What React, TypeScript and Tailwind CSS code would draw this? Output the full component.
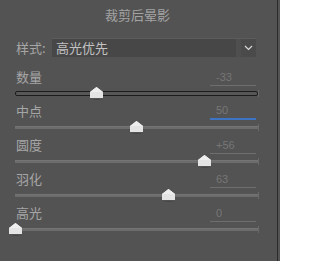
import React from "react";

const font = { fontFamily: '"Noto Sans CJK SC", "Noto Sans", sans-serif' };

type Row = { label: string; value: string; pct: number; focused?: boolean; active?: boolean };

const rows: Row[] = [
  { label: "数量", value: "-33", pct: 0.335, active: true },
  { label: "中点", value: "50", pct: 0.5, focused: true },
  { label: "圆度", value: "+56", pct: 0.78 },
  { label: "羽化", value: "63", pct: 0.63 },
  { label: "高光", value: "0", pct: 0 },
];

function Thumb({ pct }: { pct: number }) {
  const left = pct * 243 - 6.5;
  return (
    <svg
      className="absolute top-[1px]"
      style={{ left }}
      width="14"
      height="14"
      viewBox="0 0 14 14"
    >
      <polygon points="7,12 13,13 1,13" fill="#3a3a3a" opacity="0.6" />
      <polygon points="6.5,0 13,5 13,11 0,11 0,5" fill="#e4e4e4" />
      <polygon points="6.5,0 13,5 0,5" fill="#eeeeee" />
    </svg>
  );
}

function SliderRow({ row }: { row: Row }) {
  return (
    <div className="h-[34px] flex flex-col">
      <div className="h-[18px] flex items-center justify-between pl-[16px]">
        <span className="text-[13px] leading-[18px] text-[#a6a6a6]">{row.label}</span>
        <div
          className={
            row.focused
              ? "w-[46px] h-[18px] mr-[21px] pl-[6px] border-b-2 border-[#3d74c4] flex items-center"
              : "w-[46px] h-[18px] mr-[21px] pl-[6px] border-b border-[#6e6e6e] flex items-center"
          }
        >
          <span className="text-[11px] leading-[14px] text-[#767676]" style={{ fontFamily: '"Liberation Sans", sans-serif' }}>
            {row.value}
          </span>
        </div>
      </div>
      <div className="relative h-[16px] ml-[15px] w-[243px]">
        {row.active ? (
          <div className="absolute left-0 right-0 top-[5px] h-[5px] rounded-[2px] border border-[#1c1c1c] bg-[#575757]" />
        ) : (
          <div className="absolute left-0 right-0 top-[6px] h-[3px] bg-[#6c6c6c] border-t border-[#747474]" />
        )}
        <div className="absolute right-[-1px] top-[4px] w-[1px] h-[7px] bg-[#6a6a6a]" />
        <Thumb pct={row.pct} />
      </div>
    </div>
  );
}

export default function App() {
  return (
    <div className="w-[280px] h-[261px] bg-[#535353] flex overflow-hidden" style={font}>
      <div className="w-[277px] flex flex-col">
        <div className="h-[38px] pt-[6px] flex justify-center">
          <span className="text-[13px] leading-[18px] text-[#a3a3a3] ml-[-2px]">裁剪后晕影</span>
        </div>
        <div className="h-[19px] flex items-center pl-[16px]">
          <span className="w-[36px] text-[13px] leading-[18px] text-[#a6a6a6]">样式:</span>
          <div className="w-[204px] h-[19px] flex bg-[#4f4f4f] border-t border-[#5c5c5c]">
            <div className="flex-1 bg-[#474747] flex items-center pl-[4px] mr-[5px]">
              <span className="text-[13px] leading-[18px] text-[#c2c2c2]">高光优先</span>
            </div>
            <div className="w-[15px] bg-[#4a4a4a] flex items-center justify-center">
              <svg width="9" height="6" viewBox="0 0 9 6">
                <polyline points="1,1 4.5,4.5 8,1" fill="none" stroke="#d8d8d8" strokeWidth="1.2" />
              </svg>
            </div>
          </div>
        </div>
        <div className="h-[11px]" />
        {rows.map((r) => (
          <SliderRow key={r.label} row={r} />
        ))}
      </div>
      <div className="w-[1px] h-full bg-[#2c2c2c]" />
      <div className="flex-1 bg-[#535353]" />
    </div>
  );
}
